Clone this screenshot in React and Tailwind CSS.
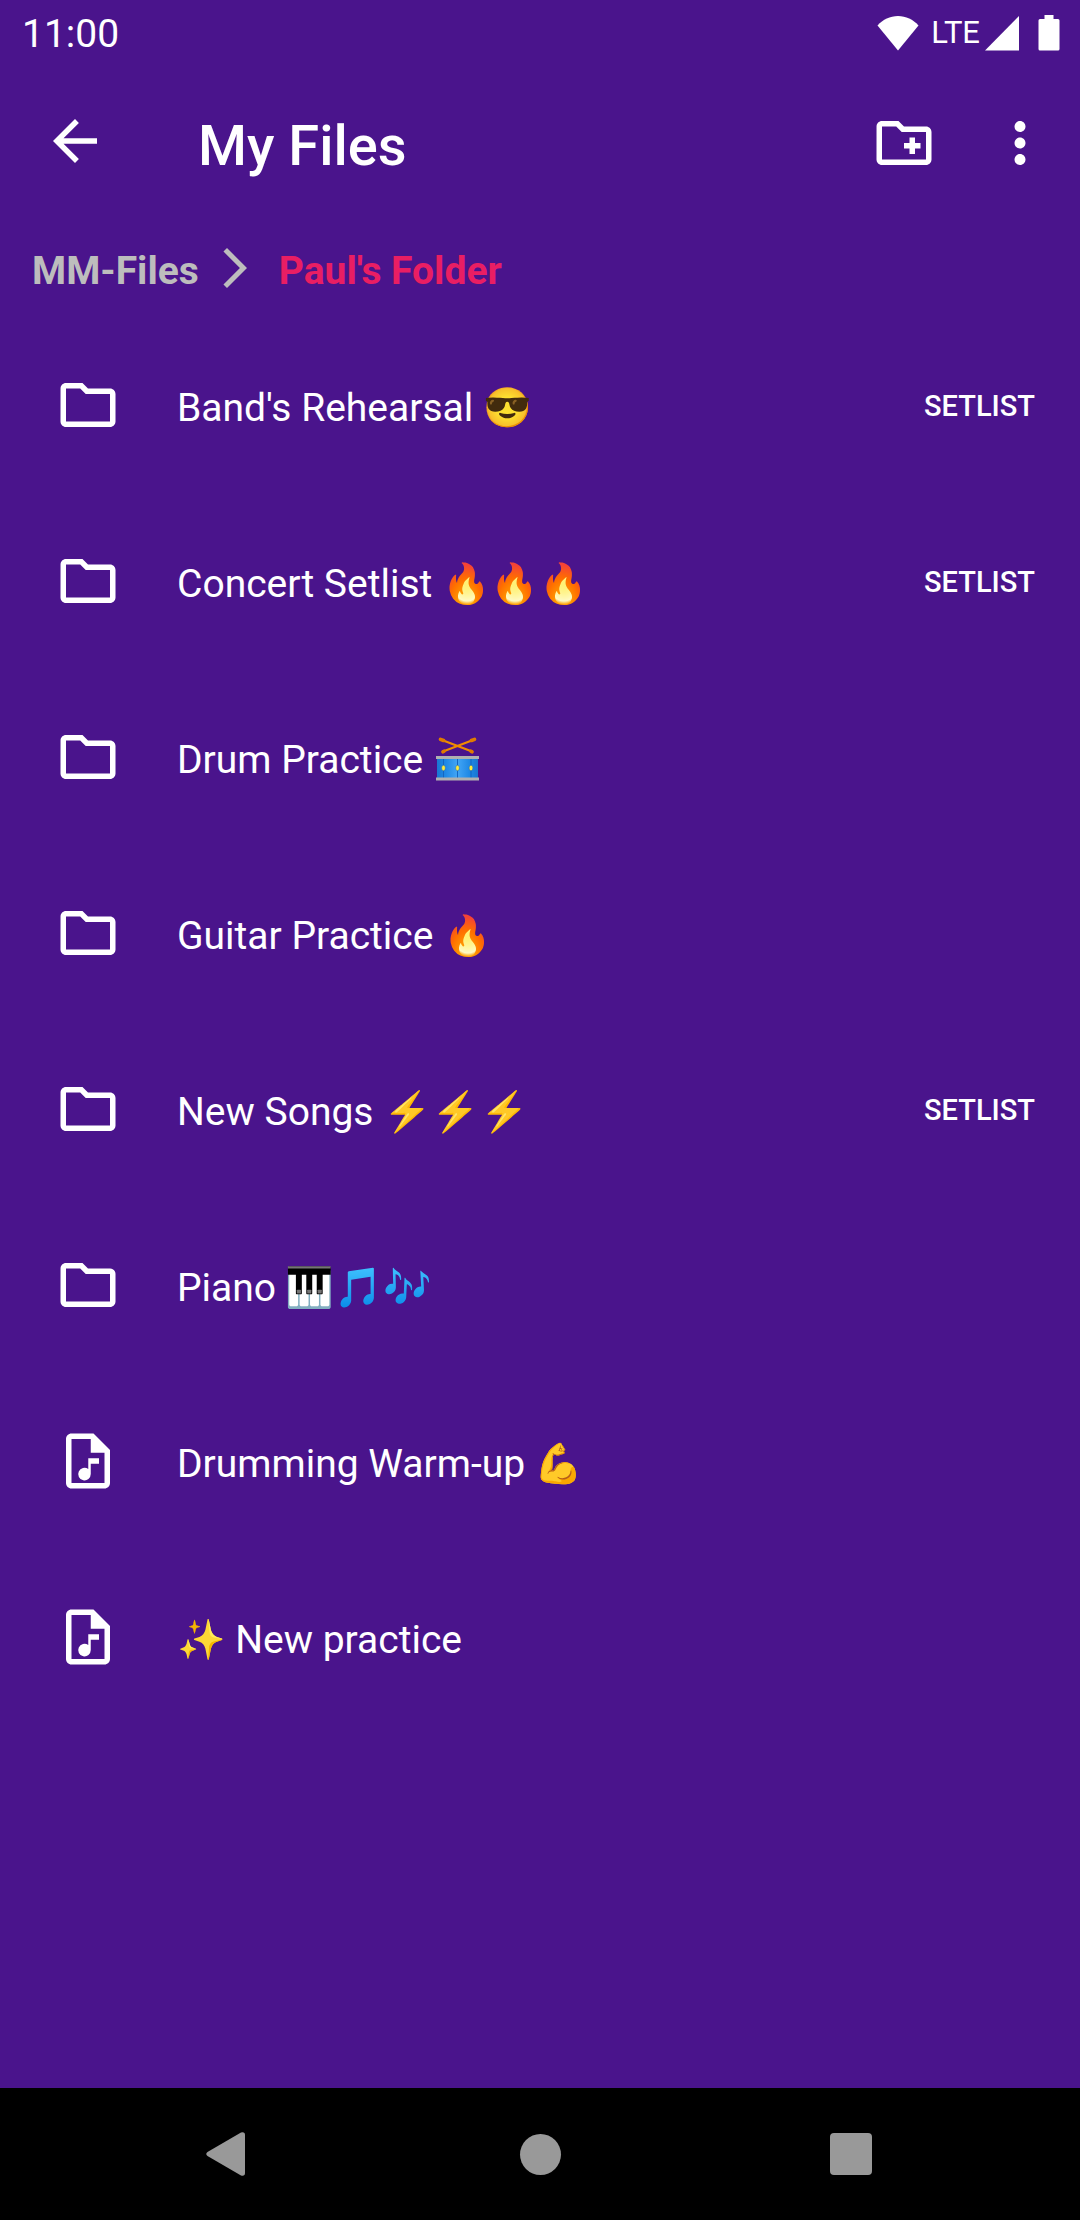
const FILES = [
  { name: "Band's Rehearsal 😎", kind: 'folder', setlist: true },
  { name: 'Concert Setlist 🔥🔥🔥', kind: 'folder', setlist: true },
  { name: 'Drum Practice ', kind: 'folder', extra: <DrumEmoji /> },
  { name: 'Guitar Practice 🔥', kind: 'folder' },
  { name: 'New Songs ⚡⚡⚡', kind: 'folder', setlist: true },
  { name: 'Piano 🎹', kind: 'folder', extra: <BlueNotes /> },
  { name: 'Drumming Warm-up 💪', kind: 'audio' },
  { name: '✨ New practice', kind: 'audio' },
]

const ICONS = {
  back: 'M20 11H7.83l5.59-5.59L12 4l-8 8 8 8 1.41-1.41L7.83 13H20v-2z',
  folder: 'M9.17 6l2 2H20v10H4V6h5.17M10 4H4c-1.1 0-1.99.9-1.99 2L2 18c0 1.1.9 2 2 2h16c1.1 0 2-.9 2-2V8c0-1.1-.9-2-2-2h-8l-2-2z',
  newFolder:
    'M9.17 6l2 2H20v10H4V6h5.17M10 4H4c-1.1 0-1.99.9-1.99 2L2 18c0 1.1.9 2 2 2h16c1.1 0 2-.9 2-2V8c0-1.1-.9-2-2-2h-8l-2-2zM14 10h2v2h2v2h-2v2h-2v-2h-2v-2h2z',
  more: 'M12 8c1.1 0 2-.9 2-2s-.9-2-2-2-2 .9-2 2 .9 2 2 2zm0 2c-1.1 0-2 .9-2 2s.9 2 2 2 2-.9 2-2-.9-2-2-2zm0 6c-1.1 0-2 .9-2 2s.9 2 2 2 2-.9 2-2-.9-2-2-2z',
  chevron: 'M6.23 20.23L8 22l10-10L8 2 6.23 3.77 14.46 12z',
  // page with a folded corner and a note inside
  audio:
    'M14 2H6c-1.1 0-2 .9-2 2v16c0 1.1.9 2 2 2h12c1.1 0 2-.9 2-2V8l-6-6zM6 20V4h7v5h5v11H6zM12.100 11H16v2h-3v3.750a2.280 2.280 0 1 1-.9-1.800z',
}

function Icon({ name, className = 'w-[66px] h-[66px]' }) {
  return (
    <svg viewBox="0 0 24 24" fill="currentColor" fillRule="evenodd" aria-hidden="true" className={`shrink-0 ${className}`}>
      <path d={ICONS[name]} />
    </svg>
  )
}

// Blue drum with crossed sticks, laid over the plain emoji
function DrumEmoji() {
  return (
    <span className="relative inline-block">
      <span className="text-transparent">🥁</span>
      <svg viewBox="0 0 43 44" aria-hidden="true" className="absolute left-[3px] top-0 w-[43px] h-[44px]">
        <defs>
          <linearGradient id="drum-shell">
            <stop offset="0" stopColor="#1976d2" />
            <stop offset="0.2" stopColor="#1e88e5" />
            <stop offset="0.5" stopColor="#42a5f5" />
            <stop offset="0.8" stopColor="#1e88e5" />
            <stop offset="1" stopColor="#1976d2" />
          </linearGradient>
        </defs>
        <g stroke="#f08c00" strokeWidth="2.2" strokeLinecap="round">
          <path d="M4 2.200L36 14.500" />
          <path d="M39 2.200L7 14.500" />
        </g>
        <g stroke="#e07b00" strokeWidth="3.6" strokeLinecap="round">
          <path d="M35 14.200l1 .6M8 14.200l-1 .6M4.500 2.300l3 1.200M38.500 2.300l-3 1.200" />
        </g>
        <path d="M1 20h41v22H1z" fill="url(#drum-shell)" />
        <path d="M7.500 21v20M21.500 21v20M35 21v20" stroke="#1565c0" strokeWidth="1" />
        <path d="M0 19h43v3H0zM0 40.500h43v3H0z" fill="#b0b0b0" />
        <g fill="#ffeb3b" stroke="#1565c0" strokeWidth="0.5">
          <ellipse cx="7.5" cy="31" rx="1.9" ry="2.8" />
          <ellipse cx="21.5" cy="31" rx="1.9" ry="2.8" />
          <ellipse cx="35" cy="31" rx="1.9" ry="2.8" />
        </g>
      </svg>
    </span>
  )
}

function BlueNotes() {
  return <span className="bg-linear-to-b from-[#40c4ff] to-[#0288e8] bg-clip-text text-transparent">🎵🎶</span>
}

function StatusBar() {
  return (
    <div className="flex h-[66px] items-center justify-between pl-[22px] pr-5">
      <span className="pt-[2px] text-[39px] leading-[46px]">11:00</span>
      <div className="flex items-center">
        <svg viewBox="0 0 42 36" fill="currentColor" className="w-[42px] h-[36px]">
          <path d="M21 35.500L.5 10.500C6 4.500 13 1 21 1s15 3.500 20.500 9.500z" />
        </svg>
        <span className="ml-3 text-[31px] leading-[38px]">LTE</span>
        <svg viewBox="0 0 36 36" fill="currentColor" className="ml-1 w-[36px] h-[36px]">
          <path d="M1 35.500L35 1v34.500z" />
        </svg>
        <svg viewBox="0 0 22 36" fill="currentColor" className="ml-[18px] w-[22px] h-[36px]">
          <path d="M6.500 0h9v4H20q1.500 0 1.500 1.500v28.500q0 1.500-1.500 1.500H2Q.5 35.500.5 34V5.500Q.5 4 2 4h4.500z" />
        </svg>
      </div>
    </div>
  )
}

function Toolbar() {
  return (
    <header className="flex h-[154px] items-center pl-[42px] pr-[27px]">
      <button aria-label="Back" className="pb-1">
        <Icon name="back" />
      </button>
      <h1 className="ml-[90px] flex-1 pt-[6px] text-[56px] leading-[64px] font-medium">My Files</h1>
      <button aria-label="New folder">
        <Icon name="newFolder" />
      </button>
      <button aria-label="More options" className="ml-[50px]">
        <Icon name="more" />
      </button>
    </header>
  )
}

function Breadcrumbs() {
  return (
    <nav aria-label="Breadcrumb" className="flex h-[97px] items-center gap-3 px-8 text-[39px] leading-[46px] font-bold">
      <a href="#root" className="pt-1 text-[#bdbdbd]">MM-Files</a>
      <Icon name="chevron" className="mb-[2px] w-[48px] h-[48px] text-[#bdbdbd]" />
      <a href="#folder" aria-current="page" className="pl-2 pt-1 text-[#e91e63]">Paul's Folder</a>
    </nav>
  )
}

function FileRow({ file }) {
  return (
    <li>
      <button className="flex h-[176px] w-full items-center pl-[55px] pr-[45px] text-left">
        <Icon name={file.kind} />
        <span className="ml-14 flex-1 pt-[6px] text-[39px] leading-[46px]">
          {file.name}
          {file.extra}
        </span>
        {file.setlist && <span className="pt-[2px] text-[29px] leading-[36px] font-medium">SETLIST</span>}
      </button>
    </li>
  )
}

function SystemNav() {
  return (
    <nav aria-label="System" className="flex h-[132px] items-center justify-between bg-black px-[163px] text-[#999999]">
      <button aria-label="System back" className="flex w-[132px] justify-center">
        <svg viewBox="0 0 48 48" fill="currentColor" className="w-[48px] h-[48px]">
          <path d="M2.500 22L36 2.500Q40 1.500 40 5v38q0 3.500-4 2.500L2.500 26q-2.500-2 0-4z" />
        </svg>
      </button>
      <button aria-label="Home" className="flex w-[132px] justify-center">
        <span className="h-[41px] w-[41px] rounded-full bg-[#999999]" />
      </button>
      <button aria-label="Recent apps" className="flex w-[132px] justify-center">
        <span className="h-[42px] w-[42px] rounded-[4px] bg-[#999999]" />
      </button>
    </nav>
  )
}

export default function App() {
  return (
    <div className="flex min-h-screen flex-col bg-[#4a148c] font-['Roboto','Noto_Color_Emoji',sans-serif] text-white">
      <StatusBar />
      <Toolbar />
      <Breadcrumbs />
      <main className="flex-1">
        <ul>
          {FILES.map((file) => (
            <FileRow key={file.name} file={file} />
          ))}
        </ul>
      </main>
      <SystemNav />
    </div>
  )
}
